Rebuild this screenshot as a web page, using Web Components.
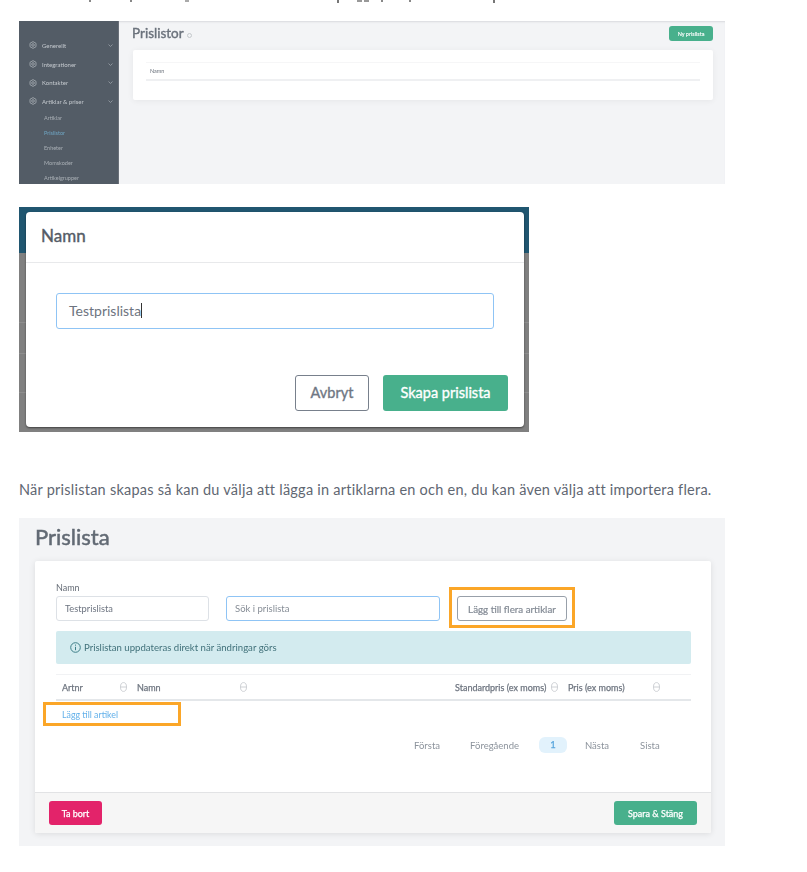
<!DOCTYPE html>
<html lang="sv">
<head>
<meta charset="utf-8">
<title>Prislistor</title>
<style>
html, body { margin: 0; background: #fff; }
</style>
</head>
<body>
<article-page>
  <admin-shot></admin-shot>
  <name-modal></name-modal>
  <p>När prislistan skapas så kan du välja att lägga in artiklarna en och en, du kan även välja att importera flera.</p>
  <pricelist-shot></pricelist-shot>
</article-page>

<script>
const FONT = '"Lato", "Open Sans", "Liberation Sans", sans-serif';

// small helper, every element here is only markup + styles
function define(name, html) {
  const template = document.createElement('template');
  template.innerHTML = html;
  customElements.define(name, class extends HTMLElement {
    constructor() {
      super();
      this.attachShadow({ mode: 'open' });
      this.shadowRoot.appendChild(template.content.cloneNode(true));
    }
  });
}

define('article-page', `
<style>
:host { display: block; width: 807px; height: 872px; overflow: hidden; padding-left: 19px; box-sizing: border-box; font-family: ${FONT}; color: #5c6470; }
.clipped {
  height: 3px; width: 500px;
  background:
    linear-gradient(#888,#888) 70px 0/2px 2px no-repeat,
    linear-gradient(#888,#888) 111px 0/2px 2px no-repeat,
    linear-gradient(#aaa,#aaa) 166px 0/4px 2px no-repeat,
    linear-gradient(#777,#777) 318px 0/2px 3px no-repeat,
    linear-gradient(#999,#999) 338px 0/5px 2px no-repeat,
    linear-gradient(#999,#999) 345px 0/5px 2px no-repeat,
    linear-gradient(#888,#888) 362px 0/2px 2px no-repeat,
    linear-gradient(#888,#888) 390px 0/2px 2px no-repeat,
    linear-gradient(#777,#777) 474px 0/2px 3px no-repeat;
}
::slotted(p) { margin: 50px 0 20px; height: 16px; font-size: 14.5px; line-height: 16px; letter-spacing: .24px; color: #5f6772; white-space: nowrap; }
::slotted(admin-shot) { margin-top: 18px; }
::slotted(name-modal) { margin-top: 23px; }
</style>
<div class="clipped"></div>
<slot></slot>
`);

define('gear-icon', `
<style>:host { display: block; width: 8px; height: 8px; } svg { display: block; }</style>
<svg viewBox="0 0 16 16" width="8" height="8" fill="none" stroke="#aab0b6" stroke-width="1.6">
  <path d="M8 1.2l6 3.4v6.8l-6 3.4-6-3.4V4.6z"/><circle cx="8" cy="8" r="2.6"/>
</svg>
`);

define('sort-icon', `
<style>:host { display: block; width: 7px; height: 10px; } svg { display: block; }</style>
<svg viewBox="0 0 7 10" width="7" height="10" fill="none" stroke="#cdd0d4" stroke-width="1">
  <ellipse cx="3.5" cy="5" rx="3" ry="4.4"/><path d="M.5 5h6"/>
</svg>
`);

define('info-icon', `
<style>:host { display: block; width: 11px; height: 11px; } svg { display: block; }</style>
<svg viewBox="0 0 11 11" width="11" height="11" fill="none" stroke="#3f7f88" stroke-width="1">
  <circle cx="5.5" cy="5.5" r="4.8"/><path d="M5.5 4.8v3.4M5.5 2.6v1.1"/>
</svg>
`);

define('side-item', `
<style>
:host { display: flex; align-items: center; height: 18.7px; padding: 0 5px 0 10px; gap: 5px; font-size: 6px; color: #c4c9ce; }
.label { flex: 1; white-space: nowrap; }
svg { display: block; }
</style>
<gear-icon></gear-icon>
<span class="label"><slot></slot></span>
<svg width="5" height="3" viewBox="0 0 5 3" fill="none" stroke="#9aa1a8" stroke-width=".8"><path d="M.5.5l2 2 2-2"/></svg>
`);

define('sub-item', `
<style>
:host { display: block; height: 15px; line-height: 15px; padding-left: 25px; font-size: 5.5px; color: #aab0b6; white-space: nowrap; }
:host([active]) { color: #6fa6c4; }
</style>
<slot></slot>
`);

define('ui-button', `
<style>
:host { display: flex; align-items: center; justify-content: center; box-sizing: border-box; border-radius: 3px; white-space: nowrap; -webkit-text-stroke: var(--stroke, .35px) currentColor; background: var(--bg, #48b08c); color: var(--fg, #fff); border: var(--bd, 0); }
:host([kind=outline]) { --bg: #fff; --fg: #6f7783; --bd: 1px solid #78808c; }
:host([kind=pink]) { --bg: #e3236a; }
</style>
<slot></slot>
`);

define('text-box', `
<style>
:host { display: flex; align-items: center; box-sizing: border-box; background: #fff; border: 1px solid #dde1e6; border-radius: 3px; padding-left: 12px; white-space: nowrap; color: #6d7480; }
:host([focus]) { border-color: #8fc4f5; }
.caret { display: none; width: 1px; height: 15px; background: #333; }
:host([caret]) .caret { display: block; }
</style>
<slot></slot><i class="caret"></i>
`);

define('head-cell', `
<style>
:host { display: flex; align-items: center; justify-content: space-between; box-sizing: border-box; width: var(--w); padding-left: var(--pad, 0); font-size: 9px; -webkit-text-stroke: .25px currentColor; color: #6f7681; white-space: nowrap; }
</style>
<span><slot></slot></span><sort-icon></sort-icon>
`);

define('page-link', `
<style>
:host { display: block; font-size: 9.5px; color: #8c939c; white-space: nowrap; }
:host([current]) { box-sizing: border-box; width: 28px; height: 16px; line-height: 16px; text-align: center; border-radius: 6px; background: #e2f2fc; color: #5aa7dd; -webkit-text-stroke: .25px currentColor; }
</style>
<slot></slot>
`);

define('admin-shot', `
<style>
:host { display: grid; grid-template-columns: 100px 1fr; width: 706px; height: 163px; overflow: hidden; background: #f3f4f6; box-shadow: inset 0 2px 2px -1px #d8dadd; filter: blur(.6px); }
nav { background: #535c66; padding-top: 15px; border-right: 1px solid #6a7079; }
main { padding: 0 12px 0 14px; }
.top { display: flex; justify-content: space-between; align-items: flex-start; height: 29px; padding-top: 5px; box-sizing: border-box; }
h1 { margin: 0 0 0 -1px; font-size: 13.5px; line-height: 15px; font-weight: 400; -webkit-text-stroke: .4px currentColor; color: #6b727c; display: flex; align-items: center; gap: 3px; }
h1 i { display: block; width: 5px; height: 5px; border: 1px solid #c4c8cc; border-radius: 50%; box-sizing: border-box; margin-top: 3px; }
ui-button { width: 44px; height: 15px; font-size: 5.5px; --stroke: .1px; }
.card { background: #fff; height: 50px; border-radius: 2px; box-shadow: 0 1px 6px rgba(0,0,0,.06); padding: 12px 13px 0; box-sizing: border-box; }
.head { border-top: 1px solid #f6f6f7; border-bottom: 2px solid #eff0f2; height: 19px; box-sizing: border-box; padding-left: 4px; line-height: 16px; font-size: 5.5px; color: #6b727c; }
</style>
<nav>
  <side-item>Generellt</side-item>
  <side-item>Integrationer</side-item>
  <side-item>Kontakter</side-item>
  <side-item>Artiklar &amp; priser</side-item>
  <sub-item>Artiklar</sub-item>
  <sub-item active>Prislistor</sub-item>
  <sub-item>Enheter</sub-item>
  <sub-item>Momskoder</sub-item>
  <sub-item>Artikelgrupper</sub-item>
</nav>
<main>
  <div class="top"><h1>Prislistor <i></i></h1><ui-button>Ny prislista</ui-button></div>
  <div class="card"><div class="head">Namn</div></div>
</main>
`);

define('name-modal', `
<style>
:host {
  display: block; width: 510px; height: 225px; box-sizing: border-box; padding: 5px 5px 5px 7px;
  background:
    linear-gradient(#8e8e8e,#8e8e8e) 0 115px/100% 1px no-repeat,
    linear-gradient(#8e8e8e,#8e8e8e) 0 146px/100% 1px no-repeat,
    linear-gradient(#8e8e8e,#8e8e8e) 0 185px/100% 1px no-repeat,
    linear-gradient(#205670 46px, #808080 46px);
}
.dialog { height: 215px; background: #fff; border-radius: 4px; box-shadow: 0 1px 2px rgba(0,0,0,.5); }
header { height: 51px; box-sizing: border-box; border-bottom: 1px solid #e8e9eb; padding: 13px 16px 0 15px; font-size: 17px; line-height: 22px; -webkit-text-stroke: .4px currentColor; color: #555c66; }
.body { padding: 30px 30px 0; height: 81px; box-sizing: border-box; }
text-box { height: 36px; font-size: 14px; padding-bottom: 2px; }
footer { display: flex; justify-content: flex-end; gap: 14px; padding: 31px 16px 0 0; }
ui-button { height: 36px; font-size: 14.5px; padding-bottom: 2px; }
.cancel { width: 74px; }
.create { width: 125px; }
</style>
<div class="dialog">
  <header>Namn</header>
  <div class="body"><text-box focus caret>Testprislista</text-box></div>
  <footer>
    <ui-button class="cancel" kind="outline">Avbryt</ui-button>
    <ui-button class="create">Skapa prislista</ui-button>
  </footer>
</div>
`);

define('pricelist-shot', `
<style>
:host { display: block; width: 706px; height: 328px; box-sizing: border-box; padding: 8px 14px 0 16px; background: #f3f4f6; filter: blur(.5px); }
h1 { margin: 0; height: 35px; font-size: 22px; line-height: 21px; font-weight: 400; -webkit-text-stroke: .5px currentColor; color: #626a74; }
.card { height: 272px; background: #fff; border-radius: 2px; box-shadow: 0 1px 6px rgba(0,0,0,.1); display: flex; flex-direction: column; }
.content { flex: 1; padding: 21px 20px 0 21px; }
label { display: block; font-size: 9px; line-height: 11px; margin-top: 0; margin-bottom: 3px; color: #666d77; }
.fields { display: grid; grid-template-columns: 153px 214px 110px; column-gap: 17px; align-items: end; height: 39px; }
text-box { height: 25px; font-size: 9.3px; padding-left: 8px; padding-bottom: 1px; }
.search { color: #868d96; font-size: 9.5px; }
.more { position: relative; height: 25px; font-size: 9.8px; }
.more ui-button { height: 25px; --fg: #858c96; --bd: 1px solid #98a0aa; --stroke: .2px; }
.mark { position: absolute; box-sizing: border-box; border: 3.5px solid #fba628; pointer-events: none; }
.more .mark { left: -8px; top: -9px; width: 126px; height: 41px; }
.alert { display: flex; align-items: center; gap: 3px; height: 33px; margin-top: 10px; padding-left: 14px; box-sizing: border-box; background: #d3ebef; border-radius: 2px; font-size: 9.6px; color: #42727b; }
.head { display: grid; grid-template-columns: 81px 318px 113px 1fr; align-items: center; height: 27px; margin-top: 10px; border-top: 1px solid #f1f2f4; border-bottom: 2px solid #e4e7ea; box-sizing: border-box; }
.add { position: relative; height: 28px; padding: 8px 0 0 6px; box-sizing: border-box; font-size: 8.8px; color: #62b0ea; }
.add .mark { left: -13px; top: 1px; width: 138px; height: 24px; }
.pager { display: flex; align-items: center; height: 16px; margin-top: 8px; padding-left: 358px; }
.pager :nth-child(1) { margin-right: 30px; }
.pager :nth-child(2) { margin-right: 20px; }
.pager :nth-child(3) { margin-right: 18px; }
.pager :nth-child(4) { margin-right: 31px; }
footer { display: flex; justify-content: space-between; height: 41px; padding: 8px 14px 0; box-sizing: border-box; background: #f6f6f6; border-top: 1px solid #e2e3e5; border-radius: 0 0 2px 2px; }
footer ui-button { height: 24px; font-size: 9px; --stroke: .25px; }
.remove { width: 53px; }
.save { width: 83px; }
</style>
<h1>Prislista</h1>
<div class="card">
  <div class="content">
    <div class="fields">
      <div><label>Namn</label><text-box>Testprislista</text-box></div>
      <text-box class="search" focus>Sök i prislista</text-box>
      <div class="more"><ui-button kind="outline">Lägg till flera artiklar</ui-button><div class="mark"></div></div>
    </div>
    <div class="alert"><info-icon></info-icon>Prislistan uppdateras direkt när ändringar görs</div>
    <div class="head">
      <head-cell style="--w:71px;--pad:6px">Artnr</head-cell>
      <head-cell style="--w:110px">Namn</head-cell>
      <head-cell style="--w:103px">Standardpris (ex moms)</head-cell>
      <head-cell style="--w:92px">Pris (ex moms)</head-cell>
    </div>
    <div class="add">Lägg till artikel<div class="mark"></div></div>
    <div class="pager">
      <page-link>Första</page-link>
      <page-link>Föregående</page-link>
      <page-link current>1</page-link>
      <page-link>Nästa</page-link>
      <page-link>Sista</page-link>
    </div>
  </div>
  <footer>
    <ui-button class="remove" kind="pink">Ta bort</ui-button>
    <ui-button class="save">Spara &amp; Stäng</ui-button>
  </footer>
</div>
`);
</script>
</body>
</html>
